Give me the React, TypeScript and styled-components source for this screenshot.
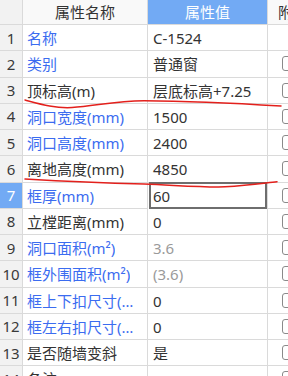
import React from "react";
import styled, { createGlobalStyle, css } from "styled-components";

const Global = createGlobalStyle`
  html, body { margin: 0; padding: 0; background: #ffffff; overflow: hidden; }
  body { width: 288px; height: 376px; }
`;

const Wrap = styled.div`
  position: relative;
  width: 288px;
  height: 376px;
  overflow: hidden;
  font-family: "Noto Sans", "Noto Sans CJK SC", sans-serif;
  font-size: 15px;
  color: #333333;
`;

const Grid = styled.div`
  display: grid;
  grid-template-columns: 23px 125px 120px 60px;
  grid-template-rows: 25px;
  grid-auto-rows: 26.25px;
  width: 328px;
`;

const Cell = styled.div<{ $head?: boolean; $num?: boolean; $active?: boolean; $blueHead?: boolean }>`
  box-sizing: border-box;
  border-right: 1px solid #dadada;
  border-bottom: 1px solid #dadada;
  display: flex;
  align-items: center;
  white-space: nowrap;
  overflow: hidden;
  line-height: 20px;
  background: #ffffff;
  ${(p) => p.$head && css`
    background: #f9f9f9;
    justify-content: center;
    color: #333333;
  `}
  ${(p) => p.$num && css`
    background: #f2f2f2;
    justify-content: center;
    color: #3a3a3a;
  `}
  ${(p) => (p.$active || p.$blueHead) && css`
    background: #72aaf4;
    color: #ffffff;
  `}
`;

const ExtraHead = styled(Cell)`
  justify-content: flex-start;
  padding-left: 10px;
`;

const NameCell = styled(Cell)<{ $blue?: boolean }>`
  padding: 0 10px 0 4px;
  color: ${(p) => (p.$blue ? "#3b6cf0" : "#333333")};
`;

const Ellip = styled.span`
  overflow: hidden;
  text-overflow: ellipsis;
  min-width: 0;
  padding-top: 1px;
`;

const ValueCell = styled(Cell)<{ $gray?: boolean; $sel?: boolean }>`
  padding: 1px 6px 0 5px;
  color: ${(p) => (p.$gray ? "#9a9a9a" : "#333333")};
  ${(p) => p.$sel && css`
    box-shadow: inset 0 0 0 2px #6e6e6e;
    margin: -1px 0 0 1px;
    border-bottom-width: 0;
    padding-left: 4px;
  `}
`;

const ExtraCell = styled(Cell)`
  padding-left: 14px;
`;

const Check = styled.div`
  width: 13px;
  height: 13px;
  border: 1px solid #8a8a8a;
  border-radius: 3px;
  background: #fff;
`;

const Marks = styled.svg`
  position: absolute;
  left: 0;
  top: 0;
  pointer-events: none;
`;

type Row = { name: string; value: string; blue?: boolean; gray?: boolean; check?: boolean };

const rows: Row[] = [
  { name: "名称", value: "C-1524", blue: true, check: false },
  { name: "类别", value: "普通窗", blue: true },
  { name: "顶标高(m)", value: "层底标高+7.25" },
  { name: "洞口宽度(mm)", value: "1500", blue: true },
  { name: "洞口高度(mm)", value: "2400", blue: true },
  { name: "离地高度(mm)", value: "4850" },
  { name: "框厚(mm)", value: "60", blue: true },
  { name: "立樘距离(mm)", value: "0" },
  { name: "洞口面积(m²)", value: "3.6", blue: true, gray: true },
  { name: "框外围面积(m²)", value: "(3.6)", blue: true, gray: true },
  { name: "框上下扣尺寸(mm)", value: "0", blue: true },
  { name: "框左右扣尺寸(mm)", value: "0", blue: true },
  { name: "是否随墙变斜", value: "是" },
  { name: "备注", value: "" },
];

export default function App() {
  return (
    <Wrap>
      <Global />
      <Grid>
        <Cell $head $num />
        <Cell $head>属性名称</Cell>
        <Cell $head $blueHead>属性值</Cell>
        <ExtraHead $head>附加</ExtraHead>
        {rows.map((r, i) => {
          const n = i + 1;
          const sel = n === 7;
          return (
            <React.Fragment key={n}>
              <Cell $num $active={sel}>{n}</Cell>
              <NameCell $blue={r.blue}>
                <Ellip>{r.name}</Ellip>
              </NameCell>
              <ValueCell $gray={r.gray} $sel={sel}>{r.value}</ValueCell>
              <ExtraCell>{r.check === false ? null : <Check />}</ExtraCell>
            </React.Fragment>
          );
        })}
      </Grid>
      <Marks width="288" height="376" viewBox="0 0 288 376">
        <path
          d="M25 100 C 40 104, 55 108.5, 72 107.5 C 95 106, 115 101, 144 100.7 C 190 101, 240 103.5, 281 106"
          fill="none"
          stroke="#e3201c"
          strokeWidth="1.5"
          strokeLinecap="round"
        />
        <path
          d="M25 179 C 60 181, 105 183, 144 184 C 180 185.5, 205 187.5, 225 186.8 C 250 185.5, 265 183, 277 181.8"
          fill="none"
          stroke="#e3201c"
          strokeWidth="1.5"
          strokeLinecap="round"
        />
      </Marks>
    </Wrap>
  );
}
